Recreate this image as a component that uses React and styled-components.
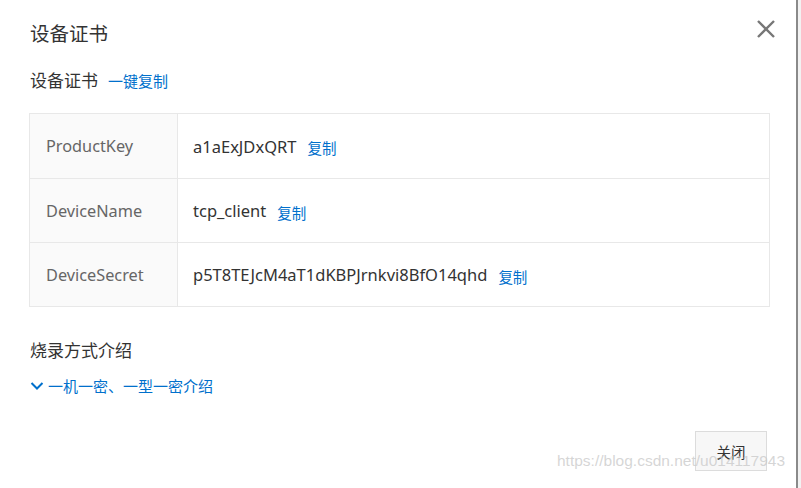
import React from 'react'
import styled, { createGlobalStyle } from 'styled-components'

const GlobalStyle = createGlobalStyle`
  html, body {
    margin: 0;
    padding: 0;
    background: #fff;
  }
  body {
    font-family: "Noto Sans", "Noto Sans CJK SC", sans-serif;
  }
`

const Page = styled.div`
  display: flex;
  width: 801px;
  height: 488px;
  overflow: hidden;
  position: relative;
`

const Dialog = styled.div`
  width: 798px;
  height: 488px;
  box-sizing: border-box;
  background: #fff;
  border-right: 2px solid #8a8a8a;
  padding: 17px 30px 0 30px;
  display: flex;
  flex-direction: column;
`

const Backdrop = styled.div`
  flex: 1;
  background: #f2f2f2;
`

const Header = styled.div`
  display: flex;
  justify-content: space-between;
  align-items: center;
  height: 30px;
`

const Title = styled.h2`
  margin: 0;
  font-size: 19.5px;
  font-weight: 400;
  color: #333;
`

const CloseBtn = styled.button`
  border: none;
  background: none;
  padding: 0;
  margin-right: -11px;
  margin-top: -6px;
  width: 22px;
  height: 22px;
  cursor: pointer;
  display: flex;
  align-items: center;
  justify-content: center;
`

const SectionHead = styled.div`
  display: flex;
  align-items: baseline;
  gap: 10px;
  margin-top: ${(p) => p.top}px;
`

const SectionTitle = styled.span`
  font-size: 17px;
  color: #333;
`

const Link = styled.a`
  font-size: 15px;
  color: #0070cc;
  text-decoration: none;
  cursor: pointer;
`

const Table = styled.div`
  margin-top: 21px;
  width: 739px;
  margin-left: -1px;
  border: 1px solid #e8e8e8;
  display: grid;
  grid-template-columns: 148px 1fr;
`

const Label = styled.div`
  height: 64px;
  box-sizing: border-box;
  display: flex;
  align-items: center;
  padding-left: 16px;
  background: #fafafa;
  border-right: 1px solid #e8e8e8;
  border-top: ${(p) => (p.first ? 'none' : '1px solid #e8e8e8')};
  color: #666;
  font-size: 16.3px;
`

const Value = styled.div`
  height: 64px;
  box-sizing: border-box;
  display: flex;
  align-items: center;
  gap: 11px;
  padding-left: 15px;
  border-top: ${(p) => (p.first ? 'none' : '1px solid #e8e8e8')};
  color: #333;
  font-size: 16.5px;
`

const CopyLink = styled(Link)`
  margin-top: 3px;
  font-size: 14.5px;
`

const Expand = styled.a`
  display: flex;
  align-items: center;
  gap: 4px;
  margin-top: 13px;
  font-size: 15px;
  color: #0070cc;
  cursor: pointer;
`

const Footer = styled.div`
  margin-top: auto;
  margin-bottom: 17px;
  display: flex;
  justify-content: flex-end;
`

const Button = styled.button`
  width: 72px;
  height: 40px;
  margin-right: -1px;
  border: 1px solid #dcdcdc;
  background: #f7f7f7;
  color: #333;
  font-family: "Noto Sans CJK SC", sans-serif;
  font-size: 14.5px;
  cursor: pointer;
`

const Watermark = styled.div`
  position: absolute;
  left: 557px;
  top: 452px;
  font-family: "Liberation Sans", sans-serif;
  font-size: 15.5px;
  color: rgba(200, 200, 200, 0.75);
  pointer-events: none;
`

const rows = [
  { label: 'ProductKey', value: 'a1aExJDxQRT' },
  { label: 'DeviceName', value: 'tcp_client' },
  { label: 'DeviceSecret', value: 'p5T8TEJcM4aT1dKBPJrnkvi8BfO14qhd' },
]

const App = () => {
  return (
    <Page>
      <GlobalStyle />
      <Dialog>
        <Header>
          <Title>设备证书</Title>
          <CloseBtn aria-label="close">
            <svg width="18" height="18" viewBox="0 0 18 18">
              <path d="M1 1L17 17M17 1L1 17" stroke="#777" strokeWidth="2.4" />
            </svg>
          </CloseBtn>
        </Header>

        <SectionHead top={20}>
          <SectionTitle>设备证书</SectionTitle>
          <Link>一键复制</Link>
        </SectionHead>

        <Table>
          {rows.map((r, i) => (
            <React.Fragment key={r.label}>
              <Label first={i === 0}>{r.label}</Label>
              <Value first={i === 0}>
                {r.value}
                <CopyLink>复制</CopyLink>
              </Value>
            </React.Fragment>
          ))}
        </Table>

        <SectionHead top={30}>
          <SectionTitle>烧录方式介绍</SectionTitle>
        </SectionHead>

        <Expand>
          <svg width="14" height="10" viewBox="0 0 14 10">
            <path d="M1.5 2L7 7.5L12.5 2" fill="none" stroke="#0070cc" strokeWidth="2" />
          </svg>
          一机一密、一型一密介绍
        </Expand>

        <Footer>
          <Button>关闭</Button>
        </Footer>
      </Dialog>
      <Backdrop />
      <Watermark>https://blog.csdn.net/u014117943</Watermark>
    </Page>
  )
}

export default App
